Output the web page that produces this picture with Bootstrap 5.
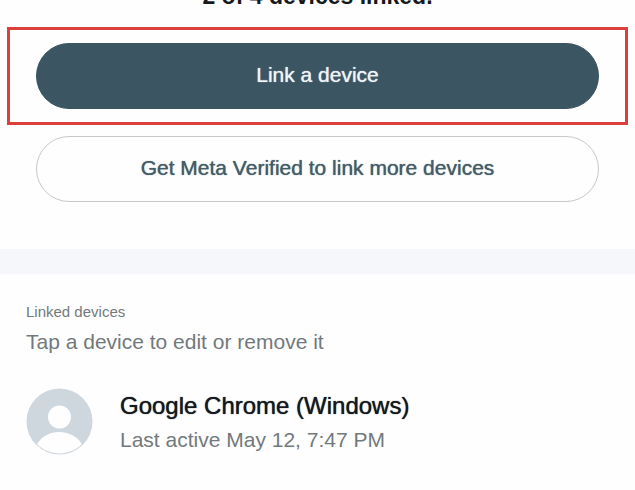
<!DOCTYPE html>
<html lang="en">
<head>
<meta charset="utf-8">
<meta name="viewport" content="width=device-width, initial-scale=1">
<title>Linked devices</title>
<link href="https://cdn.jsdelivr.net/npm/bootstrap@5.3.0/dist/css/bootstrap.min.css" rel="stylesheet">
<style>
body { font-family: "Liberation Sans", Arial, sans-serif; color: #15191d; background: #fefefe; }
.status-title { font-size: 23px; line-height: 24px; height: 8px; margin-bottom: 19px; }
.highlight { margin: 0 7px; padding: 13px 26px; border: 3px solid #dd403c; }
.pill { height: 66px; font-size: 21px; line-height: 24px; padding-bottom: 8px; text-shadow: 0 0 1px currentColor; }
.pill-dark { --bs-btn-color: #eef3f6; --bs-btn-bg: #3b5562; --bs-btn-border-color: #3b5562; --bs-btn-hover-color: #fff; --bs-btn-hover-bg: #31485a; }
.pill-light { --bs-btn-color: #465c67; --bs-btn-border-color: #c8c8c8; --bs-btn-hover-bg: #f5f7fa; }
.secondary-action { margin: 11px 36px 47px; }
.divider { height: 25px; background: #f5f7fa; }
.devices { padding: 28px 26px; color: #72797c; }
.section-name { font-size: 15px; line-height: 20px; }
.hint { font-size: 21px; line-height: 24px; margin-top: 8px; margin-bottom: 33px; }
.device { color: inherit; gap: 27px; }
.device-name { font-size: 24px; line-height: 38px; color: #15191d; text-shadow: 0 0 1px currentColor; }
.device-time { font-size: 21px; line-height: 30px; }
</style>
</head>
<body>
<main>
  <section>
    <div class="status-title overflow-hidden d-flex align-items-end justify-content-center fw-bold">2 of 4 devices linked.</div>
    <div class="highlight">
      <button type="button" class="btn pill pill-dark rounded-pill w-100">Link a device</button>
    </div>
    <div class="secondary-action">
      <button type="button" class="btn pill pill-light rounded-pill w-100">Get Meta Verified to link more devices</button>
    </div>
  </section>
  <div class="divider"></div>
  <section class="devices">
    <h2 class="section-name fw-normal mb-0">Linked devices</h2>
    <p class="hint">Tap a device to edit or remove it</p>
    <a href="#" class="device d-flex align-items-center text-decoration-none">
      <svg class="flex-shrink-0" width="67" height="67" viewBox="0 0 67 67" aria-hidden="true">
        <circle cx="33.500" cy="33.500" r="33" fill="#ced6de"/>
        <circle cx="33.500" cy="29" r="11.500" fill="#fefefe"/>
        <path d="M11 56C16 48 24 44 33 44s18 4 23 12C50 62 42 65.500 33.500 65.500S17 62 11 56Z" fill="#fefefe"/>
      </svg>
      <span class="d-flex flex-column">
        <span class="device-name">Google Chrome (Windows)</span>
        <span class="device-time">Last active May 12, 7:47 PM</span>
      </span>
    </a>
  </section>
</main>
<script src="https://cdn.jsdelivr.net/npm/bootstrap@5.3.0/dist/js/bootstrap.bundle.min.js"></script>
</body>
</html>
